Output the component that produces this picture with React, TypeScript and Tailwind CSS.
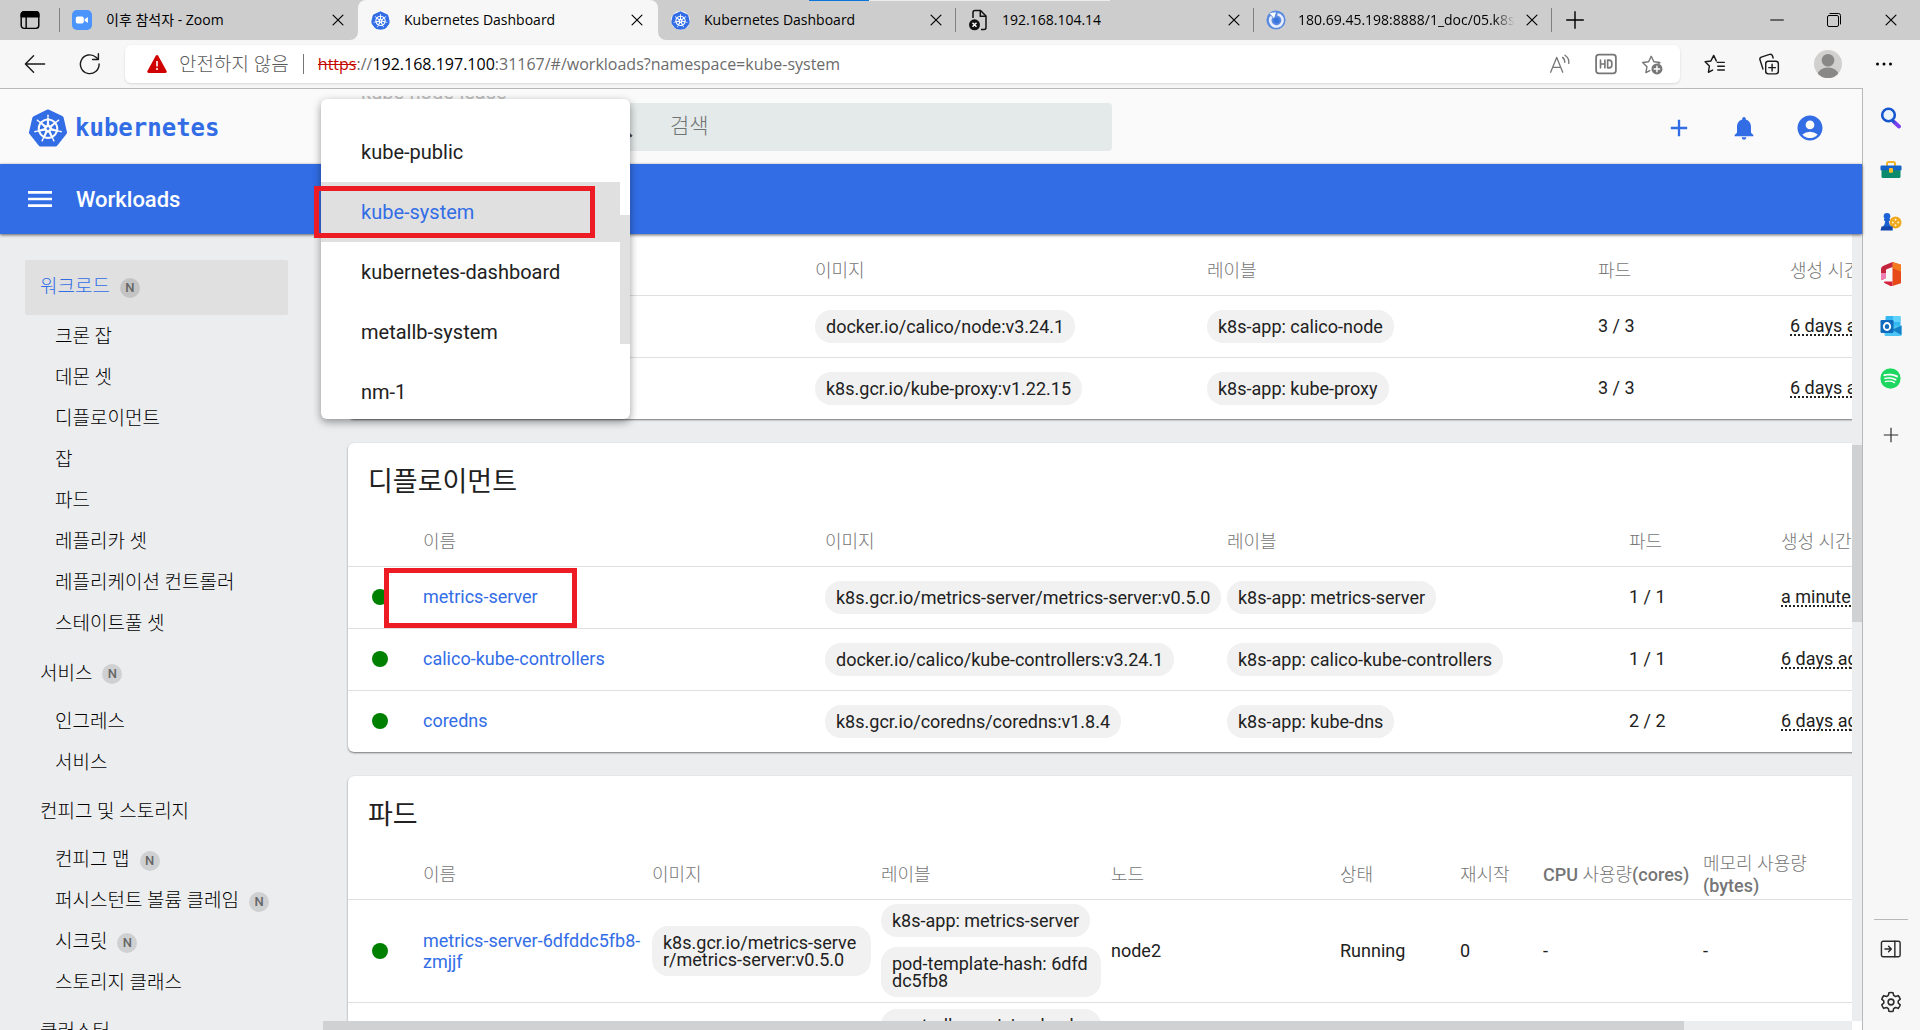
import { Fragment } from "react";
import type { ReactNode } from "react";
import { SiKubernetes } from "react-icons/si";
import { FaSpotify } from "react-icons/fa";
import { MdAccountCircle, MdAdd, MdMenu, MdNotifications, MdSearch } from "react-icons/md";

/* ---------- browser chrome icons ---------- */

type IconProps = { className?: string };

const Line = ({ className = "size-5", children }: IconProps & { children: ReactNode }) => (
  <svg viewBox="0 0 20 20" fill="none" stroke="currentColor" strokeWidth="1.3" strokeLinecap="round" strokeLinejoin="round" className={className} aria-hidden="true">
    {children}
  </svg>
);

const CloseIcon = () => (
  <Line className="size-[18px]">
    <path d="M4.5 4.5l11 11M15.5 4.5l-11 11" />
  </Line>
);

const TabActionsIcon = () => (
  <Line className="size-[22px]">
    <rect x="2" y="2.6" width="16" height="15" rx="2.6" />
    <path d="M2 7V5a2.5 2.5 0 0 1 2.500-2.500h11A2.500 2.500 0 0 1 18 5v2z" fill="currentColor" />
    <path d="M6.500 7v10.500" />
  </Line>
);

const ZoomLogo = () => (
  <svg viewBox="0 0 20 20" className="size-5" aria-hidden="true">
    <rect width="20" height="20" rx="5" fill="#4a94fb" />
    <rect x="3.800" y="6.500" width="8" height="7" rx="1.800" fill="#fff" />
    <path d="M12.600 9.200l3.300-2.300v6.200l-3.300-2.300z" fill="#fff" />
  </svg>
);

const KubeTabIcon = () => (
  <span className="flex size-5 items-center justify-center text-[#326de6]">
    <SiKubernetes className="size-[19px] rounded-full bg-white" />
  </span>
);

const BrokenPageIcon = () => (
  <svg viewBox="0 0 20 22" fill="none" stroke="#111" strokeWidth="1.500" className="h-[22px] w-5" aria-hidden="true">
    <path d="M5 9V3.500A2 2 0 0 1 7 1.500h5.500L18 7v11.500a2 2 0 0 1-2 2h-3" />
    <path d="M12.300 1.700v5.500H18" />
    <circle cx="6.500" cy="15.800" r="5.500" fill="#111" stroke="none" />
    <path d="M4.500 13.800l4 4M8.500 13.800l-4 4" stroke="#fff" />
  </svg>
);

const SwirlIcon = () => (
  <svg viewBox="0 0 20 20" className="size-5" aria-hidden="true">
    <circle cx="10" cy="10" r="9.600" fill="#5b8be0" />
    <path d="M5.500 6.500a6.200 6.200 0 1 0 6-2.300" fill="none" stroke="#e8eefb" strokeWidth="2.600" />
    <path d="M3.500 3l6.500-.800-2 6z" fill="#fff" />
    <circle cx="10.500" cy="10.500" r="3" fill="#3a74dd" />
  </svg>
);

const BackIcon = () => (
  <Line className="size-6">
    <path d="M2 10h16M8.800 3.200L2 10l6.800 6.800" strokeWidth="1.200" />
  </Line>
);

const ReloadIcon = () => (
  <Line className="size-6">
    <path d="M17.600 10a7.800 7.800 0 1 1-2.600-5.600l1.900 1.700" strokeWidth="1.200" />
    <path d="M17 1.500v4.800h-4.800" strokeWidth="1.200" />
  </Line>
);

const WarningIcon = () => (
  <svg viewBox="0 0 20 20" className="size-5" aria-hidden="true">
    <path d="M8.900 1.600a1.300 1.300 0 0 1 2.200 0l8.500 15.500a1.300 1.300 0 0 1-1.100 1.900h-17A1.300 1.300 0 0 1 .400 17.100z" fill="#d00000" />
    <path d="M10 7v5.500" stroke="#fff" strokeWidth="1.600" />
    <circle cx="10" cy="15" r="1.100" fill="#fff" />
  </svg>
);

const ReadAloudIcon = () => (
  <Line className="size-[22px]">
    <path d="M1.500 17.500L7 4l5.500 13.500M3.300 13h7.400M12.300 4a5 5 0 0 1 2 4.500M14.500 2a8 8 0 0 1 3.500 7.500" strokeWidth="1.200" />
  </Line>
);

const HdIcon = () => (
  <Line className="size-[22px]">
    <rect x="1" y="1.500" width="18" height="17" rx="2.500" strokeWidth="1.600" />
    <path d="M5 6.500v7M9 6.500v7M5 10h4M11.500 6.500v7h1.200a2.600 2.600 0 0 0 2.600-2.600V9a2.600 2.600 0 0 0-2.600-2.500z" strokeWidth="1.500" />
  </Line>
);

const StarPlusIcon = () => (
  <Line className="size-[22px]">
    <path d="M8 16l-3.500 1.800.9-5.300L1.500 8.700l5.400-.8L9.300 3l2.400 4.900 5.400.8-1.500 1.500" />
    <circle cx="14.500" cy="14.500" r="5" fill="currentColor" stroke="none" />
    <path d="M14.500 12v5M12 14.500h5" stroke="#fff" />
  </Line>
);

const FavoritesIcon = () => (
  <Line className="size-[22px]">
    <path d="M7.800 15.500L4 17.500l.9-5.600L1 8l5.300-.800L8.800 2.200l2.400 5M12 8.500h6.500M12.500 12h6M12.500 15.500h6" />
  </Line>
);

const CollectionsIcon = () => (
  <Line className="size-[22px]">
    <rect x="7" y="7.500" width="11.500" height="11.500" rx="2.300" />
    <path d="M12.800 10.300v6M9.800 13.300h6M4.500 14.500L1.800 6.200A2 2 0 0 1 3 3.700L10.500 1.300a2 2 0 0 1 2.600 1.200l.7 2" />
  </Line>
);

const ProfileIcon = () => (
  <svg viewBox="0 0 28 28" className="size-7" aria-hidden="true">
    <circle cx="14" cy="14" r="14" fill="#d2d0ce" />
    <circle cx="14" cy="10.300" r="6.300" fill="#8a8886" />
    <path d="M4 24a10 6.500 0 0 1 20 0 14 14 0 0 1-20 0z" fill="#8a8886" />
  </svg>
);

const MoreIcon = () => (
  <svg viewBox="0 0 20 20" className="size-5" aria-hidden="true">
    <circle cx="3.500" cy="10" r="1.500" />
    <circle cx="10" cy="10" r="1.500" />
    <circle cx="16.500" cy="10" r="1.500" />
  </svg>
);

/* ---------- edge bar icons ---------- */

const SearchColorIcon = () => (
  <svg viewBox="0 0 22 22" className="size-[22px]" aria-hidden="true">
    <path d="M13.500 14.500l5.500 5" stroke="#7b3ff2" strokeWidth="3.800" strokeLinecap="round" />
    <path d="M12 13l3 3" stroke="#1f56c9" strokeWidth="2" />
    <circle cx="8.500" cy="8" r="6.300" fill="#e9f4fc" stroke="#1657d0" strokeWidth="2.600" />
  </svg>
);

const ToolboxIcon = () => (
  <svg viewBox="0 0 22 22" className="size-[22px]" aria-hidden="true">
    <path d="M7 7V4.500A1.500 1.500 0 0 1 8.500 3h5A1.500 1.500 0 0 1 15 4.500V7" fill="none" stroke="#f0b429" strokeWidth="2" />
    <path d="M1.500 9h19v8.500A1.500 1.500 0 0 1 19 19H3a1.500 1.500 0 0 1-1.500-1.500z" fill="#0c8a6c" />
    <path d="M1.500 6.500h19a1 1 0 0 1 1 1v3.700h-21V7.500a1 1 0 0 1 1-1z" fill="#1463c8" />
    <rect x="9" y="9" width="4" height="4.800" rx=".800" fill="#fbbf24" />
  </svg>
);

const GamesIcon = () => (
  <svg viewBox="0 0 22 22" className="size-[22px]" aria-hidden="true">
    <circle cx="15.500" cy="11.500" r="6" fill="#f0a81c" />
    <g fill="#fff3cf">
      <circle cx="15.500" cy="8.800" r="1" />
      <circle cx="15.500" cy="14.200" r="1" />
      <circle cx="12.900" cy="11.500" r="1" />
      <circle cx="18.200" cy="11.500" r="1" />
    </g>
    <circle cx="7" cy="5.300" r="3.300" fill="#1d62d6" />
    <path d="M4 8h6v1.800H8.800c.2 3 1 4.700 2.700 6.200H2.500c1.700-1.500 2.500-3.200 2.700-6.200H4z" fill="#1a5fd0" />
    <path d="M1.500 15.500h11.200v4H.500z" fill="#1246a8" />
  </svg>
);

const OfficeIcon = () => (
  <svg viewBox="0 0 22 26" className="h-[26px] w-[22px]" aria-hidden="true">
    <path d="M12.500 1L21 3.800v18.400L12.500 25z" fill="#e64a19" />
    <path d="M12.500 1L21 3.800v7L12.500 7z" fill="#f47a20" />
    <path d="M12.500 1L3.500 4.700A3.500 3.500 0 0 0 1 8v9.500c0 1.300 1 1.600 2 1L6 17V8.500l6.500-2.500z" fill="#c4243b" />
    <path d="M1 12v5.500c0 1.300 1 1.600 2 1L6 17v-5z" fill="#ee7fb0" />
    <path d="M4.500 20.500h8V25l-2 0-6-3a.9.9 0 0 1 0-1.500z" fill="#d61f3a" />
  </svg>
);

const OutlookIcon = () => (
  <svg viewBox="0 0 22 22" className="size-[22px]" aria-hidden="true">
    <rect x="5.500" y="1" width="15" height="12" rx="1" fill="#35b8f1" />
    <path d="M13 1h6.500a1 1 0 0 1 1 1v5H13z" fill="#5fd2fb" />
    <path d="M4.500 11l17-.5v9a1.500 1.500 0 0 1-1.500 1.500H6a1.500 1.500 0 0 1-1.500-1.500z" fill="#4cc5f5" />
    <path d="M21.500 10.500V20L12 14.800z" fill="#1380c8" />
    <rect x=".500" y="5" width="13" height="13" rx="1.200" fill="#0f6cbd" />
    <ellipse cx="7" cy="11.500" rx="3.200" ry="3.500" fill="none" stroke="#fff" strokeWidth="1.900" />
  </svg>
);

const SpotifyIcon = () => <FaSpotify className="size-[21px] rounded-full bg-white text-[#1ed760]" />;

const PlusThin = ({ className = "size-5" }: IconProps) => (
  <Line className={className}>
    <path d="M10 2v16M2 10h16" strokeLinecap="butt" />
  </Line>
);

const PanelIcon = () => (
  <Line className="size-[22px]">
    <rect x="1.300" y="3" width="17" height="14" rx="1.500" />
    <path d="M13.500 3v14M4.500 10h5.500M7.800 7.500L10.300 10l-2.500 2.500" />
  </Line>
);

const GearIcon = () => (
  <Line className="size-6">
    <circle cx="10" cy="10" r="2.400" />
    <path d="M8.300 2.200a8 8 0 0 1 3.400 0l.5 2.300 1.500.9 2.300-.7a8 8 0 0 1 1.700 2.900L16 9.200v1.600l1.700 1.600a8 8 0 0 1-1.700 2.900l-2.300-.7-1.500.9-.5 2.300a8 8 0 0 1-3.400 0l-.5-2.300-1.500-.9-2.300.7a8 8 0 0 1-1.700-2.900L4 10.800V9.200L2.300 7.600A8 8 0 0 1 4 4.700l2.300.7 1.500-.9z" />
  </Line>
);

/* ---------- tab strip and address bar ---------- */

type TabInfo = { title: string; icon: ReactNode; active?: boolean; divider?: boolean; faded?: boolean };

const tabs: TabInfo[] = [
  { title: "이후 참석자 - Zoom", icon: <ZoomLogo /> },
  { title: "Kubernetes Dashboard", icon: <KubeTabIcon />, active: true },
  { title: "Kubernetes Dashboard", icon: <KubeTabIcon />, divider: true },
  { title: "192.168.104.14", icon: <BrokenPageIcon />, divider: true },
  { title: "180.69.45.198:8888/1_doc/05.k8s", icon: <SwirlIcon />, divider: true, faded: true },
];

function BrowserTab({ tab }: { tab: TabInfo }) {
  return (
    <div className={tab.active ? "relative flex w-[300px] min-w-0 items-center rounded-t-lg bg-[#f7f7f7] pr-3 pl-3" : "flex w-[298px] min-w-0 items-center pl-3"}>
      {tab.active && (
        <>
          <span className="absolute bottom-0 -left-2 size-2 bg-[#f7f7f7]">
            <span className="block size-2 rounded-br-lg bg-[#cdcdcd]" />
          </span>
          <span className="absolute -right-2 bottom-0 size-2 bg-[#f7f7f7]">
            <span className="block size-2 rounded-bl-lg bg-[#cdcdcd]" />
          </span>
        </>
      )}
      <button type="button" role="tab" aria-selected={!!tab.active} className={tab.faded ? "flex min-w-0 flex-1 items-center gap-3" : "flex min-w-0 flex-1 items-center gap-3.5"}>
        <span className="shrink-0">{tab.icon}</span>
        <span className={tab.faded ? "overflow-hidden mask-r-from-90% whitespace-nowrap" : "overflow-hidden whitespace-nowrap"}>{tab.title}</span>
      </button>
      <button type="button" aria-label="닫기" className={tab.faded ? "ml-1.5 shrink-0" : "ml-2 shrink-0"}>
        <CloseIcon />
      </button>
      {tab.divider && <span className="ml-2.5 h-6 w-px shrink-0 bg-[#808080]" />}
      {!tab.divider && !tab.active && <span className="ml-2.5 w-px shrink-0" />}
    </div>
  );
}

function TabStrip() {
  return (
    <div className="relative flex h-10 shrink-0 bg-[#cdcdcd] font-['Open_Sans','Noto_Sans_CJK_KR',sans-serif] text-sm text-black">
      <div className="flex w-[60px] shrink-0 items-center justify-between pl-[19px]">
        <button type="button" aria-label="탭 작업 메뉴">
          <TabActionsIcon />
        </button>
        <span className="h-6 w-px bg-[#808080]" />
      </div>
      <div role="tablist" className="flex min-w-0">
        {tabs.map((tab, i) => (
          <BrowserTab key={i} tab={tab} />
        ))}
      </div>
      <button type="button" aria-label="새 탭" className="ml-3 self-center">
        <PlusThin className="size-[22px]" />
      </button>
      <div className="ml-auto flex items-center gap-[38px] pr-5">
        <button type="button" aria-label="최소화">
          <Line className="size-[18px]">
            <path d="M3 10h14" />
          </Line>
        </button>
        <button type="button" aria-label="이전 크기로">
          <Line className="size-5">
            <rect x="3.500" y="5.500" width="11" height="11" rx="1.500" strokeWidth="1" />
            <path d="M6 3.500h8.500a2 2 0 0 1 2 2V14" strokeWidth="1" />
          </Line>
        </button>
        <button type="button" aria-label="창 닫기">
          <CloseIcon />
        </button>
      </div>
      <div className="absolute top-0 left-[809px] flex h-px w-[301px] bg-[#ececec]">
        <span className="w-[60px] bg-[#0a74d8]" />
      </div>
    </div>
  );
}

function AddressBar() {
  return (
    <div className="flex h-12 shrink-0 items-center bg-[#f7f7f7] pr-[26px] pl-[23px] text-[#1b1b1b]">
      <button type="button" aria-label="뒤로" className="mr-[31px]">
        <BackIcon />
      </button>
      <button type="button" aria-label="새로 고침" className="mr-[23px]">
        <ReloadIcon />
      </button>
      <div className="flex h-[38px] min-w-0 flex-1 items-center rounded-md bg-white pr-[17px] pl-[22px] font-['Open_Sans','Noto_Sans_CJK_KR',sans-serif] text-base shadow-sm">
        <WarningIcon />
        <span className="ml-3 text-[19px] leading-6 font-light text-[#5a5a5a]">안전하지 않음</span>
        <span className="mx-3.5 h-5 w-px bg-[#767676]" />
        <div role="textbox" aria-label="주소" className="min-w-0 flex-1 truncate text-[#6b6b6b]">
          <span className="text-[#c50500] line-through">https</span>://<span className="text-black">192.168.197.100</span>:31167/#/workloads?namespace=kube-system
        </div>
        <div className="flex items-center gap-6 text-[#767676]">
          <button type="button" aria-label="소리내어 읽기">
            <ReadAloudIcon />
          </button>
          <button type="button" aria-label="비디오 향상">
            <HdIcon />
          </button>
          <button type="button" aria-label="즐겨찾기에 추가">
            <StarPlusIcon />
          </button>
        </div>
      </div>
      <div className="ml-6 flex items-center">
        <button type="button" aria-label="즐겨찾기" className="mr-8">
          <FavoritesIcon />
        </button>
        <button type="button" aria-label="컬렉션" className="mr-[34px]">
          <CollectionsIcon />
        </button>
        <button type="button" aria-label="프로필" className="mr-8">
          <ProfileIcon />
        </button>
        <button type="button" aria-label="설정 및 기타">
          <MoreIcon />
        </button>
      </div>
    </div>
  );
}

function EdgeBar() {
  const apps: [string, ReactNode][] = [
    ["검색", <SearchColorIcon />],
    ["도구", <ToolboxIcon />],
    ["게임", <GamesIcon />],
    ["Office", <OfficeIcon />],
    ["Outlook", <OutlookIcon />],
    ["Spotify", <SpotifyIcon />],
  ];
  return (
    <aside className="flex w-[58px] shrink-0 flex-col items-center border-l border-[#b8b8b8] bg-[#f7f7f7] pt-1 pr-0.5 text-[#2b2b2b]">
      {apps.map(([label, icon]) => (
        <button key={label} type="button" aria-label={label} className="flex h-[52px] items-center">
          {icon}
        </button>
      ))}
      <button type="button" aria-label="추가" className="flex h-[62px] items-center">
        <PlusThin className="size-[18px]" />
      </button>
      <div className="mt-auto h-px w-[34px] bg-[#b8b8b8]" />
      <button type="button" aria-label="사이드바 숨기기" className="flex h-[58px] items-center">
        <PanelIcon />
      </button>
      <button type="button" aria-label="설정" className="mb-1 flex h-[48px] items-center">
        <GearIcon />
      </button>
    </aside>
  );
}

/* ---------- dashboard ---------- */

const namespaces = ["kube-public", "kube-system", "kubernetes-dashboard", "metallb-system", "nm-1"];

function NamespaceMenu() {
  return (
    <div className="absolute top-2.5 left-[321px] z-20 h-80 w-[309px] rounded-md bg-white shadow-[0_3px_8px_rgba(0,0,0,0.4)]">
      <div className="absolute -top-[3px] left-10 h-[3px] overflow-hidden text-xl text-[#b0b0b0]">
        <span className="-mt-[16px] block leading-6">kube-node-lease</span>
      </div>
      <ul role="listbox" aria-label="네임스페이스" className="pt-[23px] text-xl text-[#212121]">
        {namespaces.map((name) => {
          const selected = name === "kube-system";
          return (
            <li key={name} className="relative">
              <button
                type="button"
                role="option"
                aria-selected={selected}
                className={selected ? "flex h-[60px] w-[299px] items-center bg-[#e0e0e0] pl-10 text-[#326de6]" : "flex h-[60px] w-[299px] items-center pl-10"}
              >
                {name}
              </button>
              {selected && <span className="pointer-events-none absolute top-1 -left-[7px] h-[52px] w-[281px] border-5 border-[#ed1c24]" />}
            </li>
          );
        })}
      </ul>
      <span className="absolute top-[116px] right-0 h-[129px] w-2.5 bg-[#e0e0e0]" />
    </div>
  );
}

function DashboardHeader() {
  return (
    <header className="relative z-10 shrink-0">
      <div className="flex h-[75px] items-center bg-[#fafafa] pr-[37px] text-[#326de6]">
        <a href="#/workloads" className="flex w-[597px] shrink-0 items-center gap-2 pt-0.5 pl-[29px]">
          <SiKubernetes className="size-[38px]" />
          <span className="font-['DejaVu_Sans_Mono',monospace] text-2xl font-bold">kubernetes</span>
        </a>
        <label className="flex h-12 w-[515px] items-center rounded-sm bg-[#e4e9e9] pl-2.5 text-[#3c4a55]">
          <MdSearch className="size-[30px]" />
          <input type="text" placeholder="검색" aria-label="검색" className="ml-[33px] min-w-0 flex-1 bg-transparent text-[21px] font-light text-black outline-none placeholder:text-[#6f7373]" />
        </label>
        <div className="ml-auto flex items-center gap-[37px] pt-0.5">
          <button type="button" aria-label="새 리소스 생성">
            <MdAdd className="size-7" />
          </button>
          <button type="button" aria-label="알림">
            <MdNotifications className="size-7" />
          </button>
          <button type="button" aria-label="사용자">
            <MdAccountCircle className="size-[30px]" />
          </button>
        </div>
      </div>
      <div className="flex h-[70px] items-center gap-5 bg-[#326de6] pl-6 text-white shadow-[0_1px_3px_rgba(0,0,0,0.6)]">
        <button type="button" aria-label="메뉴">
          <MdMenu className="size-8" />
        </button>
        <h1 className="text-[22px] font-medium">Workloads</h1>
      </div>
    </header>
  );
}

type NavItem = { label: string; ns?: boolean };
type NavGroup = NavItem & { selected?: boolean; items: NavItem[] };

const nav: NavGroup[] = [
  {
    label: "워크로드",
    ns: true,
    selected: true,
    items: [
      { label: "크론 잡" },
      { label: "데몬 셋" },
      { label: "디플로이먼트" },
      { label: "잡" },
      { label: "파드" },
      { label: "레플리카 셋" },
      { label: "레플리케이션 컨트롤러" },
      { label: "스테이트풀 셋" },
    ],
  },
  { label: "서비스", ns: true, items: [{ label: "인그레스" }, { label: "서비스" }] },
  {
    label: "컨피그 및 스토리지",
    items: [{ label: "컨피그 맵", ns: true }, { label: "퍼시스턴트 볼륨 클레임", ns: true }, { label: "시크릿", ns: true }, { label: "스토리지 클래스" }],
  },
  { label: "클러스터", items: [] },
];

const NsBadge = () => <span className="flex size-5 items-center justify-center rounded-full bg-black/12 text-[13px] font-medium text-[#666]">N</span>;

function SideNav() {
  return (
    <nav className="w-[323px] shrink-0 overflow-hidden pt-[26px] pl-[25px] text-[19px] font-light text-black">
      {nav.map((group) => (
        <Fragment key={group.label}>
          <a
            href="#/group"
            className={
              group.selected
                ? "flex h-[55px] w-[263px] items-center gap-2.5 rounded-xs bg-[#e0e0e0] pl-[15px] text-[#326de6]"
                : "flex h-14 w-[263px] items-center gap-2.5 pt-0.5 pl-[15px]"
            }
          >
            {group.label}
            {group.ns && <NsBadge />}
          </a>
          <ul className={group.selected ? "pt-px pb-px" : ""}>
            {group.items.map((item) => (
              <li key={item.label}>
                <a href="#/item" className="flex h-[41px] items-center gap-2.5 pt-0.5 pl-[30px]">
                  {item.label}
                  {item.ns && <NsBadge />}
                </a>
              </li>
            ))}
          </ul>
        </Fragment>
      ))}
    </nav>
  );
}

const Chip = ({ children }: { children: ReactNode }) => (
  <span className="inline-block rounded-2xl bg-[#f1f1f1] px-[11px] py-2 align-middle leading-[17px] break-all">{children}</span>
);

const Status = () => (
  <td className="pl-6">
    <span className="block size-4 rounded-full bg-[#008000]" />
  </td>
);

const Age = ({ children }: { children: ReactNode }) => (
  <td className="whitespace-nowrap">
    <abbr className="underline decoration-dotted decoration-2 underline-offset-2 [text-decoration-skip-ink:none]">{children}</abbr>
  </td>
);

function Card({ title, children }: { title?: string; children: ReactNode }) {
  return (
    <section className={title ? "mb-6 rounded-md bg-white shadow-[0_1px_2px_rgba(0,0,0,0.5)]" : "mb-6 rounded-b-md bg-white shadow-[0_1px_2px_rgba(0,0,0,0.5)]"}>
      {title && <h2 className="flex h-[74px] items-center pt-1 pl-5 text-[27px] font-normal">{title}</h2>}
      <table className="w-full table-fixed border-collapse text-left">{children}</table>
    </section>
  );
}

function HeadRow({ first, labels }: { first?: boolean; labels: ReactNode[] }) {
  return (
    <thead>
      <tr className={first ? "h-[61px] border-b border-[#e0e0e0] text-[#757575]" : "h-[49px] border-b border-[#e0e0e0] text-[#757575]"}>
        <td />
        {labels.map((label, i) => (
          <th key={i} scope="col" className={first ? "pt-3.5 font-light" : "pt-0.5 font-light"}>
            {label}
          </th>
        ))}
      </tr>
    </thead>
  );
}

const Latin = ({ children }: { children: ReactNode }) => <span className="font-medium">{children}</span>;

type Workload = { name: string; image: string; label: string; pods: string; age: string; marked?: boolean };

const daemonSets: Workload[] = [
  { name: "calico-node", image: "docker.io/calico/node:v3.24.1", label: "k8s-app: calico-node", pods: "3 / 3", age: "6 days ago" },
  { name: "kube-proxy", image: "k8s.gcr.io/kube-proxy:v1.22.15", label: "k8s-app: kube-proxy", pods: "3 / 3", age: "6 days ago" },
];

const deployments: Workload[] = [
  { name: "metrics-server", image: "k8s.gcr.io/metrics-server/metrics-server:v0.5.0", label: "k8s-app: metrics-server", pods: "1 / 1", age: "a minute ago", marked: true },
  { name: "calico-kube-controllers", image: "docker.io/calico/kube-controllers:v3.24.1", label: "k8s-app: calico-kube-controllers", pods: "1 / 1", age: "6 days ago" },
  { name: "coredns", image: "k8s.gcr.io/coredns/coredns:v1.8.4", label: "k8s-app: kube-dns", pods: "2 / 2", age: "6 days ago" },
];

function WorkloadRows({ rows }: { rows: Workload[] }) {
  return (
    <tbody>
      {rows.map((row) => (
        <tr key={row.name} className="h-[62px] border-b border-[#e0e0e0] last:border-b-0">
          <Status />
          <td className="relative">
            <a href="#/detail" className="text-[#326de6]">
              {row.name}
            </a>
            {row.marked && <span className="pointer-events-none absolute top-px -left-[39px] h-[60px] w-[193px] border-5 border-[#ed1c24]" />}
          </td>
          <td className="whitespace-nowrap">
            <Chip>{row.image}</Chip>
          </td>
          <td className="whitespace-nowrap">
            <Chip>{row.label}</Chip>
          </td>
          <td>{row.pods}</td>
          <Age>{row.age}</Age>
        </tr>
      ))}
    </tbody>
  );
}

function Content() {
  return (
    <main className="min-w-0 flex-1 overflow-hidden pl-[25px] text-lg text-[#212121]">
      <div className="w-[1674px] min-w-full">
        <Card>
          <colgroup>
            <col className="w-[75px]" />
            <col className="w-[392px]" />
            <col className="w-[392px]" />
            <col className="w-[391px]" />
            <col className="w-[192px]" />
            <col />
          </colgroup>
          <HeadRow first labels={["이름", "이미지", "레이블", "파드", "생성 시간"]} />
          <WorkloadRows rows={daemonSets} />
        </Card>
        <Card title="디플로이먼트">
          <colgroup>
            <col className="w-[75px]" />
            <col className="w-[402px]" />
            <col className="w-[402px]" />
            <col className="w-[402px]" />
            <col className="w-[152px]" />
            <col />
          </colgroup>
          <HeadRow labels={["이름", "이미지", "레이블", "파드", "생성 시간"]} />
          <WorkloadRows rows={deployments} />
        </Card>
        <Card title="파드">
          <colgroup>
            <col className="w-[75px]" />
            <col className="w-[229px]" />
            <col className="w-[229px]" />
            <col className="w-[230px]" />
            <col className="w-[229px]" />
            <col className="w-[120px]" />
            <col className="w-[83px]" />
            <col className="w-[160px]" />
            <col className="w-[160px]" />
            <col />
          </colgroup>
          <HeadRow
            labels={[
              "이름",
              "이미지",
              "레이블",
              "노드",
              "상태",
              "재시작",
              <span className="whitespace-nowrap">
                <Latin>CPU</Latin> 사용량<Latin>(cores)</Latin>
              </span>,
              <span className="block w-32 leading-[22px]">
                메모리 사용량 <Latin>(bytes)</Latin>
              </span>,
              "생성 시간",
            ]}
          />
          <tbody>
            <tr className="h-[103px] border-b border-[#e0e0e0]">
              <Status />
              <td className="pr-1 leading-[21px]">
                <a href="#/detail" className="text-[#326de6]">
                  metrics-server-6dfddc5fb8-zmjjf
                </a>
              </td>
              <td className="pr-2.5">
                <Chip>k8s.gcr.io/metrics-server/metrics-server:v0.5.0</Chip>
              </td>
              <td className="pr-2.5">
                <div className="flex flex-col items-start gap-2.5">
                  <Chip>k8s-app: metrics-server</Chip>
                  <Chip>pod-template-hash: 6dfddc5fb8</Chip>
                </div>
              </td>
              <td>node2</td>
              <td>Running</td>
              <td>0</td>
              <td>-</td>
              <td>-</td>
              <Age>a minute ago</Age>
            </tr>
            <tr className="align-top">
              <td />
              <td />
              <td />
              <td className="pt-1.5 pr-2.5">
                <Chip>controller-revision-hash: 5b8d7c9f4</Chip>
              </td>
              <td colSpan={6} />
            </tr>
          </tbody>
        </Card>
      </div>
    </main>
  );
}

export default function App() {
  return (
    <div className="flex h-screen w-full flex-col overflow-hidden bg-[#f7f7f7] font-[Roboto,'Noto_Sans_CJK_KR',sans-serif]">
      <TabStrip />
      <AddressBar />
      <div className="flex min-h-0 flex-1">
        <div className="relative flex min-w-0 flex-1 flex-col border-t border-[#b8b8b8] bg-[#ecedef]">
          <DashboardHeader />
          <div className="relative flex min-h-0 flex-1">
            <SideNav />
            <Content />
            <div className="w-2.5 shrink-0 pt-[211px]">
              <div className="h-[177px] bg-[#d0d1d3]" />
            </div>
            <div className="absolute right-2.5 bottom-0 left-[323px] h-[9px] bg-[#ecedef]">
              <div className="h-full w-[89%] bg-[#d0d1d3]" />
            </div>
            <span className="absolute right-0 bottom-0 h-[9px] w-2.5 bg-white" />
          </div>
          <NamespaceMenu />
        </div>
        <EdgeBar />
      </div>
    </div>
  );
}
